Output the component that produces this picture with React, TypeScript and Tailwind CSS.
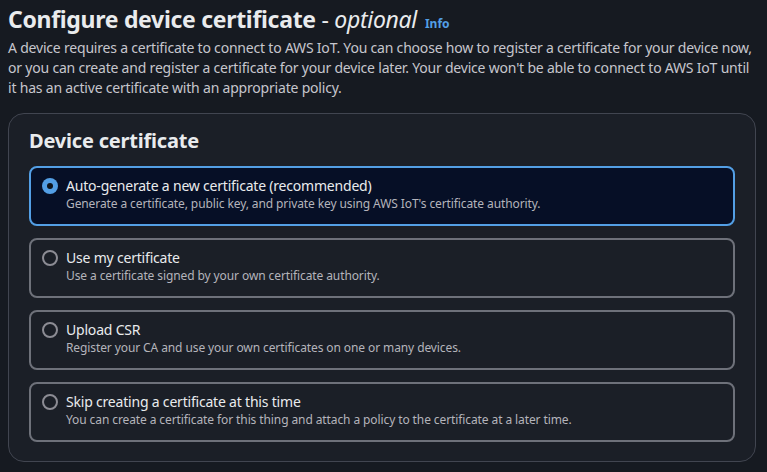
const options = [
  {
    title: "Auto-generate a new certificate (recommended)",
    desc: "Generate a certificate, public key, and private key using AWS IoT's certificate authority.",
    selected: true,
  },
  {
    title: "Use my certificate",
    desc: "Use a certificate signed by your own certificate authority.",
    selected: false,
  },
  {
    title: "Upload CSR",
    desc: "Register your CA and use your own certificates on one or many devices.",
    selected: false,
  },
  {
    title: "Skip creating a certificate at this time",
    desc: "You can create a certificate for this thing and attach a policy to the certificate at a later time.",
    selected: false,
  },
]

function Radio({ checked }: { checked: boolean }) {
  if (checked) {
    return (
      <span className="flex h-4 w-4 shrink-0 items-center justify-center rounded-full bg-[#539fe5]">
        <span className="block h-1.5 w-1.5 rounded-full bg-[#0f141a]" />
      </span>
    )
  }
  return <span className="block h-4 w-4 shrink-0 rounded-full border-2 border-[#8c8c94]" />
}

export default function App() {
  return (
    <div className="min-h-screen bg-[#161a21] px-2 pt-1 pb-3 font-['Noto_Sans',sans-serif] text-[#e9ebed]">
      <h1 className="flex h-[30px] items-baseline gap-2 text-[23px] leading-[30px] font-bold tracking-[-0.3px]">
        <span>
          Configure device certificate <span className="font-normal">-</span>{" "}
          <span className="font-normal italic">optional</span>
        </span>
        <span className="text-[12px] leading-[16px] font-bold tracking-normal text-[#539fe5]">Info</span>
      </h1>
      <p className="mt-[4px] text-[14px] leading-[20px] tracking-[-0.2px] text-[#c6c6cd]">
        A device requires a certificate to connect to AWS IoT. You can choose how to register a certificate for your device now,
        or you can create and register a certificate for your device later. Your device won't be able to connect to AWS IoT until
        it has an active certificate with an appropriate policy.
      </p>

      <div className="mt-[15px] mr-[3px] rounded-2xl border border-[#414550] bg-[#1b1f27] px-5 pt-[15px] pb-[19px]">
        <h2 className="text-[20px] leading-[24px] font-bold tracking-[-0.2px]">Device certificate</h2>
        <div className="mt-[13px] flex flex-col gap-3">
          {options.map((o) => (
            <div
              key={o.title}
              className={
                o.selected
                  ? "flex gap-2 rounded-lg border-2 border-[#539fe5] bg-[#060f26] pt-2 pr-3 pb-3 pl-[11px]"
                  : "flex gap-2 rounded-lg border-2 border-[#6e717a] pt-2 pr-3 pb-3 pl-[11px]"
              }
            >
              <div className="pt-[2px]">
                <Radio checked={o.selected} />
              </div>
              <div>
                <div className="text-[14px] leading-[20px] tracking-[-0.2px] text-[#e9ebed]">{o.title}</div>
                <div className="text-[12px] leading-[16px] tracking-[-0.1px] text-[#b4b4bb]">{o.desc}</div>
              </div>
            </div>
          ))}
        </div>
      </div>
    </div>
  )
}
